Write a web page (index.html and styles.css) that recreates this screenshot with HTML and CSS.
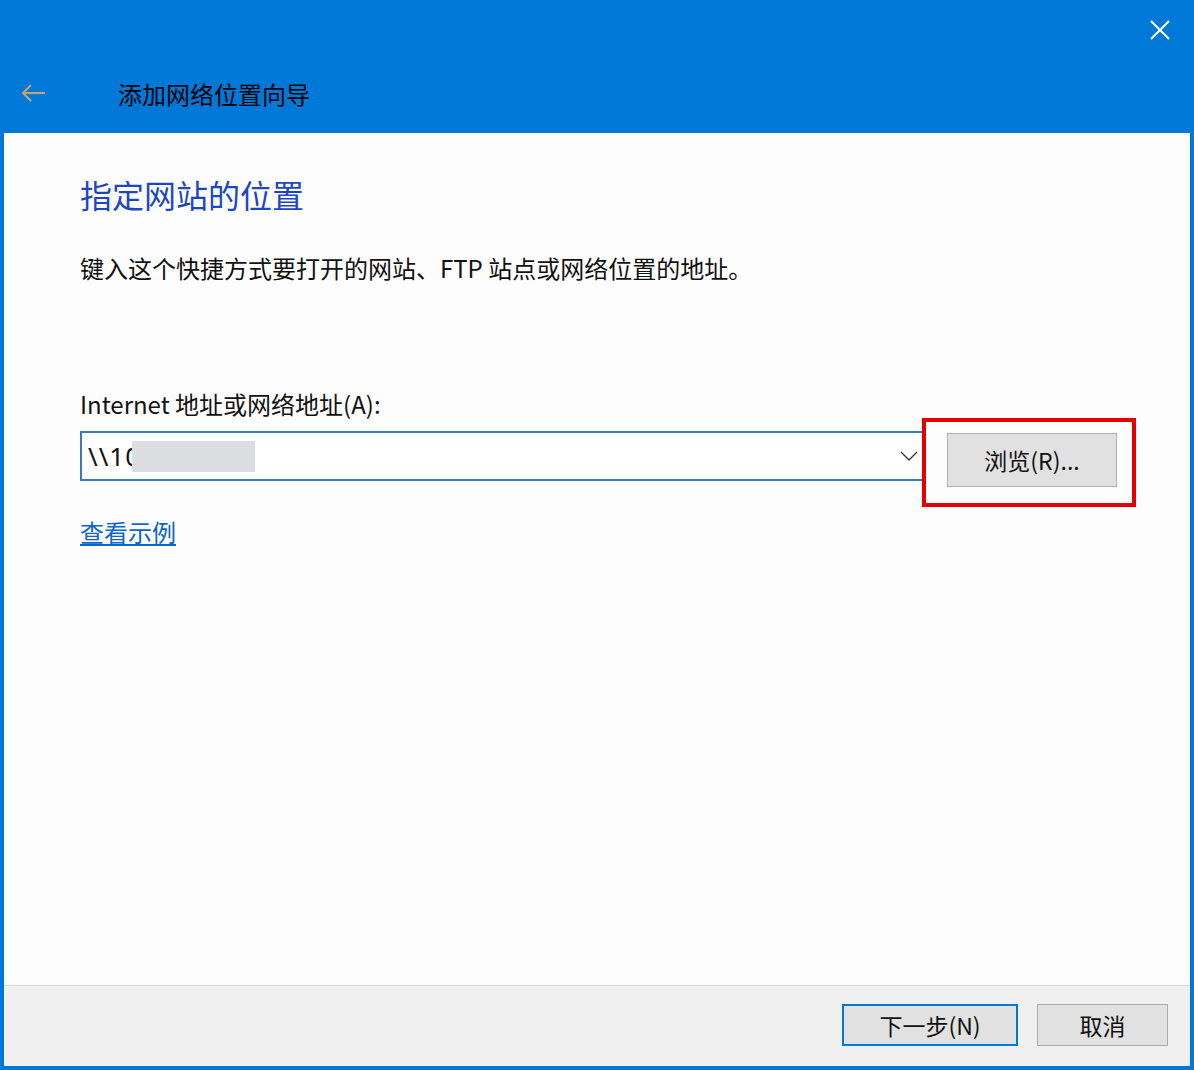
FILE: index.html
```html
<!DOCTYPE html>
<html lang="zh-CN">
<head>
<meta charset="utf-8">
<title>添加网络位置向导</title>
<link rel="stylesheet" href="styles.css">
</head>
<body>
<div class="window">
	<div class="titlebar">
		<div class="caption">
			<svg class="close" width="22" height="22" viewBox="0 0 22 22">
				<path d="M2 2 L20 20 M20 2 L2 20" stroke="#fff" stroke-width="2" fill="none"/>
			</svg>
		</div>
		<div class="nav">
			<svg class="back" width="26" height="20" viewBox="0 0 26 20">
				<path d="M25 10 H3 M11 2 L3 10 L11 18" stroke="#c9a26a" stroke-width="2" fill="none"/>
			</svg>
			<span class="wizard-title">添加网络位置向导</span>
		</div>
	</div>

	<div class="page">
		<h1>指定网站的位置</h1>
		<p class="desc">键入这个快捷方式要打开的网站、FTP 站点或网络位置的地址。</p>

		<label class="field-label">Internet 地址或网络地址(A):</label>
		<div class="field-row">
			<div class="combo">
				<span class="value">\\10</span><span class="masked"></span>
				<svg class="chevron" width="18" height="10" viewBox="0 0 18 10">
					<path d="M1 1 L9 9 L17 1" stroke="#333" stroke-width="1.3" fill="none"/>
				</svg>
			</div>
			<div class="highlight">
				<button class="btn browse">浏览(R)...</button>
			</div>
		</div>

		<a class="example" href="#">查看示例</a>
	</div>

	<div class="footer">
		<button class="btn next">下一步(N)</button>
		<button class="btn cancel">取消</button>
	</div>
</div>
</body>
</html>
```

FILE: styles.css
```css
body
{
	margin:0;
	font-family:"Noto Sans CJK SC", "Noto Sans", sans-serif;
}
.window
{
	width:1186px;
	height:1066px;
	background-color:#0078d7;
	padding:0 4px 4px 4px;
	display:flex;
	flex-direction:column;
}
.titlebar
{
	height:133px;
	display:flex;
	flex-direction:column;
}
.caption
{
	display:flex;
	justify-content:flex-end;
	padding-top:19px;
	padding-right:19px;
	height:41px;
}
.nav
{
	display:flex;
	align-items:center;
	height:66px;
}
.back
{
	margin-left:16px;
}
.wizard-title
{
	margin-left:72px;
	font-size:24px;
	color:#000;
}
.page
{
	flex:1;
	background-color:#fefdfe;
	padding:40px 0 0 76px;
	display:flex;
	flex-direction:column;
	align-items:flex-start;
}
h1
{
	margin:0;
	font-size:32px;
	line-height:42px;
	font-weight:normal;
	color:#1d47c0;
}
.desc
{
	margin:37px 0 0 0;
	font-size:24px;
	line-height:32px;
	color:#111;
}
.field-label
{
	margin-top:105px;
	font-size:24px;
	line-height:29px;
	color:#111;
}
.field-row
{
	display:flex;
	align-items:flex-start;
}
.combo
{
	margin-top:13px;
	height:46px;
	border:2px solid #3d7ab5;
	background:#fff;
	display:flex;
	align-items:center;
	padding-left:6px;
	width:834px;
}
.value
{
	font-family:"Noto Sans", sans-serif;
	font-size:26px;
	letter-spacing:1px;
	color:#111;
}
.masked
{
	display:inline-block;
	width:123px;
	height:31px;
	margin-left:-9px;
	background:#dcdde1;
}
.chevron
{
	margin-left:auto;
	margin-right:4px;
}
.highlight
{
	margin-left:-2px;
	border:4px solid #e50000;
	padding:11px 15px 16px 21px;
}
.btn
{
	font-family:"Noto Sans CJK SC", "Noto Sans", sans-serif;
	font-size:23px;
	color:#111;
	background-color:#e1e1e1;
	border:1px solid #adadad;
	padding:0;
	cursor:pointer;
}
.browse
{
	width:170px;
	height:54px;
}
.example
{
	margin-top:10px;
	font-size:24px;
	line-height:30px;
	color:#0a66cc;
	text-decoration:underline;
}
.footer
{
	height:62px;
	border-top:1px solid #dcdcdc;
	background-color:#f0f0f0;
	display:flex;
	justify-content:flex-end;
	align-items:flex-start;
	padding:18px 22px 0 0;
	gap:19px;
}
.next
{
	width:176px;
	height:42px;
	border:2px solid #0078d7;
}
.cancel
{
	width:131px;
	height:42px;
}
```
